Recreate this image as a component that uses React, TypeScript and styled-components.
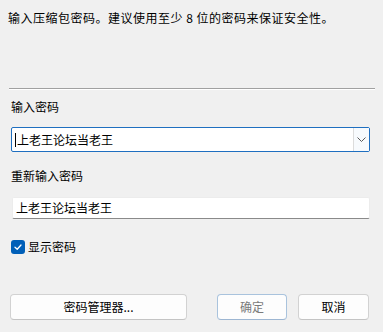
import React from "react";
import styled, { createGlobalStyle } from "styled-components";

const GlobalStyle = createGlobalStyle`
  html, body {
    margin: 0;
    padding: 0;
    background: #f0f0f0;
  }
  * {
    box-sizing: border-box;
  }
`;

const font = `"Noto Sans CJK SC", "Liberation Sans", sans-serif`;

const Dialog = styled.div`
  width: 383px;
  height: 332px;
  display: flex;
  flex-direction: column;
  background: #f0f0f0;
  font-family: ${font};
  font-size: 12px;
  color: #000;
  overflow: hidden;
`;

const Intro = styled.div`
  margin: 10px 0 0 8px;
  line-height: 16px;
  letter-spacing: 0.5px;
  white-space: nowrap;
`;

const Separator = styled.div`
  margin: 62px 8px 0 9px;
  height: 2px;
  border-top: 1px solid #a0a0a0;
  border-bottom: 1px solid #ffffff;
`;

const Label = styled.div<{ $top: number }>`
  margin: ${(p) => p.$top}px 0 0 11px;
  line-height: 16px;
`;

const Combo = styled.div`
  margin: 12px 13px 0 11px;
  height: 25px;
  display: flex;
  background: #fff;
  border: 1px solid #1f6fc0;
  border-radius: 2px;
`;

const ComboText = styled.div`
  flex: 1;
  display: flex;
  align-items: center;
  padding-left: 3px;
  line-height: 16px;
`;

const Caret = styled.span`
  display: inline-block;
  width: 1px;
  height: 14px;
  margin-right: 1px;
  background: #000;
`;

const DropButton = styled.div`
  width: 16px;
  display: flex;
  align-items: center;
  justify-content: center;
  border-left: 1px solid #dcdcdc;
  background: #f7fafd;
`;

const TextInput = styled.div`
  margin: 13px 13px 0 12px;
  height: 22px;
  display: flex;
  align-items: center;
  padding-left: 3px;
  background: #fff;
  border: 1px solid #ececec;
  border-bottom-color: #8a8a8a;
  border-radius: 2px;
  line-height: 16px;
`;

const CheckRow = styled.label`
  margin: 20px 0 0 11px;
  display: flex;
  align-items: center;
  gap: 3px;
  line-height: 16px;
`;

const Box = styled.span`
  width: 14px;
  height: 14px;
  border-radius: 3px;
  background: #005fb8;
  display: flex;
  align-items: center;
  justify-content: center;
`;

const Footer = styled.div`
  margin-top: auto;
  padding: 0 14px 12px 10px;
  display: flex;
  align-items: center;
`;

const Button = styled.div<{ $width: number; $primary?: boolean }>`
  width: ${(p) => p.$width}px;
  height: 26px;
  display: flex;
  align-items: center;
  justify-content: center;
  background: #fdfdfd;
  border: 1px solid ${(p) => (p.$primary ? "#a9c3dd" : "#d2d2d2")};
  border-bottom-color: ${(p) => (p.$primary ? "#9db6d2" : "#c4c4c4")};
  border-radius: 4px;
  color: ${(p) => (p.$primary ? "#7a7a7a" : "#000")};
  line-height: 16px;
`;

const Spacer = styled.div`
  flex: 1;
`;

const ButtonGap = styled.div`
  width: 11px;
`;

export default function App() {
  return (
    <>
      <GlobalStyle />
      <Dialog>
        <Intro>输入压缩包密码。建议使用至少 8 位的密码来保证安全性。</Intro>
        <Separator />
        <Label $top={9}>输入密码</Label>
        <Combo>
          <ComboText>
            <Caret />
            上老王论坛当老王
          </ComboText>
          <DropButton>
            <svg width="9" height="5" viewBox="0 0 9 5">
              <path d="M0.5 0.5 L4.5 4.5 L8.5 0.5" fill="none" stroke="#5a5a5a" strokeWidth="1" />
            </svg>
          </DropButton>
        </Combo>
        <Label $top={16}>重新输入密码</Label>
        <TextInput>上老王论坛当老王</TextInput>
        <CheckRow>
          <Box>
            <svg width="10" height="10" viewBox="0 0 10 10">
              <path d="M2 5.2 L4.2 7.2 L8 3" fill="none" stroke="#fff" strokeWidth="1.3" strokeLinecap="round" strokeLinejoin="round" />
            </svg>
          </Box>
          显示密码
        </CheckRow>
        <Footer>
          <Button $width={177}>密码管理器...</Button>
          <Spacer />
          <Button $width={70} $primary>确定</Button>
          <ButtonGap />
          <Button $width={71}>取消</Button>
        </Footer>
      </Dialog>
    </>
  );
}
